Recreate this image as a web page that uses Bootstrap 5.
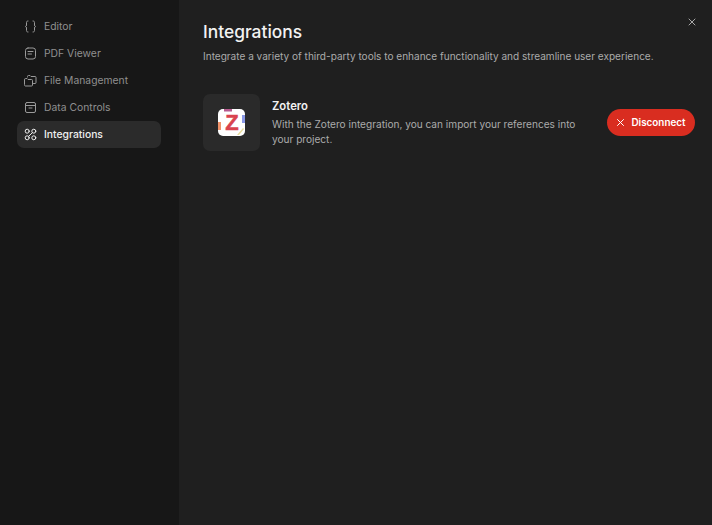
<!DOCTYPE html>
<html lang="en">
<head>
    <meta charset="UTF-8">
    <meta name="viewport" content="width=device-width, initial-scale=1.0">
    <title>Settings - Integrations</title>
    <link href="https://cdn.jsdelivr.net/npm/bootstrap@5.3.0/dist/css/bootstrap.min.css" rel="stylesheet">
    <style>
        html, body {
            height: 100%;
        }
        body {
            background-color: #1f1f1f;
            font-family: "Inter", "Liberation Sans", sans-serif;
            overflow: hidden;
        }
        .app-shell {
            height: 525px;
        }
        .side-panel {
            width: 179px;
            background-color: #171717;
            padding: 13px 18px 0 17px;
        }
        .side-link {
            height: 27px;
            padding-left: 7px;
            gap: 7px;
            border-radius: 7px;
            color: #8f8f8f;
            font-size: 10.35px;
            text-decoration: none;
        }
        .side-link.is-active {
            background-color: #2b2b2b;
            color: #f0f0f0;
            font-weight: 500;
        }
        .side-link svg {
            width: 13px;
            height: 13px;
            flex: none;
        }
        .main-panel {
            padding: 21px 17px 0 24px;
        }
        .page-title {
            font-size: 17.4px;
            line-height: 22px;
            font-weight: 500;
            color: #f2f2f2;
            margin-bottom: 4px;
        }
        .page-lead {
            font-size: 10.05px;
            line-height: 18px;
            color: #ababab;
            margin-bottom: 29px;
        }
        .logo-tile {
            width: 57px;
            height: 57px;
            border-radius: 7px;
            background-color: #2a2a2a;
        }
        .logo-tile svg {
            width: 27px;
            height: 27px;
        }
        .tool-info {
            width: 322px;
            margin-left: 12px;
        }
        .tool-name {
            font-size: 11.3px;
            line-height: 16px;
            font-weight: 600;
            color: #f2f2f2;
            margin-bottom: 3px;
        }
        .tool-text {
            font-size: 10.1px;
            line-height: 15px;
            color: #ababab;
        }
        .btn-disconnect {
            width: 88px;
            height: 27px;
            gap: 6px;
            padding: 0;
            border: 0;
            border-radius: 14px;
            background-color: #d92d20;
            color: #fff;
            font-size: 9.9px;
            font-weight: 600;
        }
        .btn-disconnect:hover {
            background-color: #c42819;
            color: #fff;
        }
        .close-x {
            top: 17px;
            left: 687px;
            width: 10px;
            height: 10px;
            padding: 0;
            border: 0;
            background: none;
            line-height: 0;
        }
    </style>
</head>
<body>
    <div class="app-shell d-flex position-relative">
        <nav class="side-panel flex-shrink-0 d-flex flex-column">
            <a href="#" class="side-link d-flex align-items-center">
                <svg viewBox="0 0 13 13" fill="none" stroke="#9a9a9a" stroke-width="1" stroke-linecap="round" stroke-linejoin="round"><path d="M4 1c-1.200 0-1.500.6-1.500 1.500v2.500c0 .9-.4 1.300-1 1.500.6.2 1 .6 1 1.500v2.500c0 .9.300 1.500 1.500 1.500"/><path d="M9 1c1.200 0 1.500.6 1.500 1.500v2.500c0 .9.400 1.300 1 1.500-.6.2-1 .6-1 1.500v2.500c0 .9-.3 1.500-1.500 1.500"/></svg>
                Editor
            </a>
            <a href="#" class="side-link d-flex align-items-center">
                <svg viewBox="0 0 13 13" fill="none" stroke="#9a9a9a" stroke-width="1" stroke-linecap="round" stroke-linejoin="round"><rect x="1.500" y="1" width="10" height="11" rx="2.500"/><path d="M4 4.500h5M4 7h3.500"/></svg>
                PDF Viewer
            </a>
            <a href="#" class="side-link d-flex align-items-center">
                <svg viewBox="0 0 13 13" fill="none" stroke="#9a9a9a" stroke-width="1" stroke-linecap="round" stroke-linejoin="round"><path d="M.5 5.500a1 1 0 0 1 1-1h1.500l1 1h3.500a1 1 0 0 1 1 1v4.500a1 1 0 0 1-1 1h-6a1 1 0 0 1-1-1z"/><path d="M3.500 3v-.5a1 1 0 0 1 1-1h1.500l1 1h4a1 1 0 0 1 1 1v5a1 1 0 0 1-1 1h-1.500"/></svg>
                File Management
            </a>
            <a href="#" class="side-link d-flex align-items-center">
                <svg viewBox="0 0 13 13" fill="none" stroke="#9a9a9a" stroke-width="1" stroke-linecap="round" stroke-linejoin="round"><rect x="1.500" y="1.500" width="10" height="10" rx="1.500"/><path d="M1.500 4.500h10M5 7h3"/></svg>
                Data Controls
            </a>
            <a href="#" class="side-link is-active d-flex align-items-center">
                <svg viewBox="0 0 13 13" fill="none" stroke="#efefef" stroke-width="1" stroke-linecap="round" stroke-linejoin="round"><circle cx="3.200" cy="3.200" r="2"/><circle cx="9.800" cy="3.200" r="2"/><circle cx="3.200" cy="9.800" r="2"/><circle cx="9.800" cy="9.800" r="2"/><path d="M4.700 8.300l3.600-3.600"/></svg>
                Integrations
            </a>
        </nav>

        <main class="main-panel flex-grow-1">
            <h1 class="page-title">Integrations</h1>
            <p class="page-lead">Integrate a variety of third-party tools to enhance functionality and streamline user experience.</p>

            <div class="d-flex align-items-center">
                <div class="logo-tile flex-shrink-0 d-flex align-items-center justify-content-center">
                    <svg viewBox="0 0 27 27">
                        <rect width="27" height="27" rx="5" fill="#fff"/>
                        <rect x="6" y="0" width="8" height="2.500" fill="#b65a8f"/>
                        <rect x="24" y="6" width="3" height="8" fill="#8a98e6"/>
                        <rect x="0" y="13" width="3" height="8" fill="#f0936a"/>
                        <path d="M19 26l6-7 1 1-5 6z" fill="#e8dc9a"/>
                        <text x="14" y="21" text-anchor="middle" font-family="Liberation Sans" font-size="22" font-weight="700" fill="#d9434f" stroke="#d9434f" stroke-width=".5">Z</text>
                    </svg>
                </div>
                <div class="tool-info">
                    <div class="tool-name">Zotero</div>
                    <div class="tool-text">With the Zotero integration, you can import your references into your project.</div>
                </div>
                <button type="button" class="btn btn-disconnect d-flex align-items-center justify-content-center ms-auto">
                    <svg width="9" height="9" viewBox="0 0 9 9" fill="none" stroke="#fff" stroke-width="1" stroke-linecap="round"><path d="M1.500 1.500l6 6M7.500 1.500l-6 6"/></svg>
                    Disconnect
                </button>
            </div>
        </main>

        <button type="button" class="close-x position-absolute" aria-label="Close">
            <svg width="10" height="10" viewBox="0 0 10 10" fill="none" stroke="#a8a8a8" stroke-width="1" stroke-linecap="round"><path d="M2 2l6 6M8 2l-6 6"/></svg>
        </button>
    </div>

    <script src="https://cdn.jsdelivr.net/npm/bootstrap@5.3.0/dist/js/bootstrap.bundle.min.js"></script>
</body>
</html>
